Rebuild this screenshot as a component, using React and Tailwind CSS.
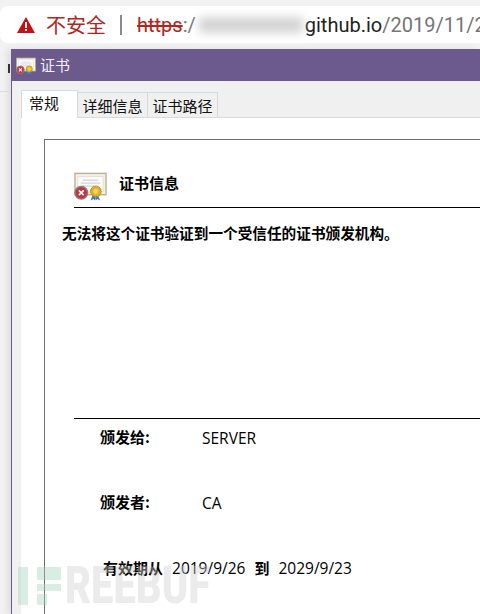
const CJK = '"Noto Sans CJK SC", "Open Sans", sans-serif';

const CertIcon = ({ w = 33, h = 29, light = false }) => (
  <svg width={w} height={h} viewBox="0 0 34 29" className="shrink-0">
    <rect x="1" y="1" width="32" height="22" fill={light ? '#f6f4ee' : '#f4f1e6'} stroke="#b9ae93" strokeWidth="1.4" />
    <rect x="4" y="4" width="26" height="16" fill="#fbfbfa" stroke="#ddd8c8" strokeWidth="0.8" />
    <path d="M9 8h16M7 11h20M8 14h13" stroke="#c3c9d6" strokeWidth="1" />
    <path d="M19 24l-2 5 3-1.5 1.5 1.5 1-5zM25 24l2 5-3-1.5-1.5 1.5-1-5z" fill="#3f79cf" />
    <circle cx="22.5" cy="19.5" r="5.5" fill="#e2b21f" stroke="#a8841a" strokeWidth="0.8" />
    <circle cx="22.5" cy="19.5" r="2.6" fill="#f1d264" />
    <circle cx="7.5" cy="21" r="6.5" fill="#c8323f" stroke="#8d7b7e" strokeWidth="1.5" />
    <path d="M5 18.5l5 5M10 18.5l-5 5" stroke="#fff" strokeWidth="1.8" />
  </svg>
);

const tabs = ['详细信息', '证书路径'];
const ROBOTO = { fontFamily: '"Roboto", sans-serif' };
const OPEN = { fontFamily: '"Open Sans", sans-serif' };

export default function App() {
  return (
    <div className="relative w-[480px] h-[614px] overflow-hidden bg-[#f2f2f2] flex flex-col" style={{ fontFamily: CJK }}>
      {/* address bar */}
      <div className="mt-[6px] h-[37px] bg-white rounded-l-[8px] flex items-center pl-[17px] whitespace-nowrap overflow-hidden">
        <svg width="18" height="16" viewBox="0 0 18 16" className="shrink-0">
          <path d="M9 0l9 16H0z" fill="#c80e0e" />
          <rect x="8" y="5" width="2" height="6" fill="#fff" />
          <rect x="8" y="12" width="2" height="2" fill="#fff" />
        </svg>
        <span className="ml-[11px] text-[20px] leading-none text-[#b3261e] shrink-0">不安全</span>
        <span className="ml-[14px] w-[2px] h-[20px] bg-[#8a8a8a] shrink-0" />
        <span className="ml-[15px] text-[20px] leading-none text-[#b3261e] line-through shrink-0" style={ROBOTO}>https</span>
        <span className="text-[20px] leading-none text-[#757575] shrink-0" style={ROBOTO}>:/</span>
        <span className="ml-[3px] w-[104px] h-[16px] bg-[#d4d4d4] blur-[5px] shrink-0" />
        <span className="ml-[2px] text-[20px] leading-none text-[#222] shrink-0" style={ROBOTO}>github.io</span>
        <span className="text-[20px] leading-none text-[#757575] shrink-0" style={ROBOTO}>/2019/11/2</span>
      </div>

      <div className="absolute left-[8px] top-[64px] w-[2px] h-[9px] bg-[#333]" />
      <div className="absolute left-0 top-[91px] w-[11px] h-px bg-[#dcdcdc]" />

      {/* dialog window */}
      <div className="mt-[6px] ml-[11px] flex-1 flex flex-col border-l border-[#6c5a8c] min-h-0 shadow-[-4px_0_6px_rgba(0,0,0,0.08)]">
        <div className="h-[32px] bg-[#6c5a8c] flex items-center pl-[4px] pt-[1px] text-[#f2f0f6] text-[15px]">
          <CertIcon w={20} h={20} light />
          <span className="ml-[4px]">证书</span>
        </div>
        <div className="flex-1 bg-[#f0f0f0] pl-[9px] flex flex-col min-h-0">
          <div className="flex items-end h-[37px] border-b border-[#d9d9d9] text-[15px] text-[#111]">
            <div className="w-[57px] h-[28px] -mb-px bg-white border border-b-0 border-[#d9d9d9] pl-[7px] pt-[1px] leading-[22px]">常规</div>
            {tabs.map((tab) => (
              <div key={tab} className="w-[70px] h-[25px] border border-l-0 border-b-0 border-[#d9d9d9] flex items-center justify-center leading-none">{tab}</div>
            ))}
          </div>
          <div className="flex-1 bg-white pl-[23px] pt-[21px] min-h-0">
            <div className="h-full border-l border-t border-[#6e6e6e] flex flex-col text-black">
              <div className="mt-[32px] ml-[29px] flex items-start h-[36px] border-b border-black">
                <CertIcon />
                <span className="ml-[12px] mt-[1px] text-[15px] font-bold leading-[20px]">证书信息</span>
              </div>
              <div className="mt-[15px] ml-[17px] text-[14.65px] font-bold leading-[20px] whitespace-nowrap">无法将这个证书验证到一个受信任的证书颁发机构。</div>
              <div className="mt-[175px] ml-[29px] border-t border-black" />
              <div className="mt-[7px] ml-[55px] flex items-center h-[22px] text-[15px]">
                <span className="w-[102px] font-bold">颁发给:</span>
                <span className="mt-[3px] text-[15.5px]" style={OPEN}>SERVER</span>
              </div>
              <div className="mt-[43px] ml-[55px] flex items-center h-[22px] text-[15px]">
                <span className="w-[102px] font-bold">颁发者:</span>
                <span className="mt-[3px] text-[15.5px]" style={OPEN}>CA</span>
              </div>
              <div className="mt-[44px] ml-[58px] flex items-center h-[22px] text-[15px] whitespace-nowrap">
                <span className="font-bold">有效期从</span>
                <span className="ml-[9px] mt-[1px] text-[15.5px]" style={OPEN}>2019/9/26</span>
                <span className="ml-[9px] font-bold">到</span>
                <span className="ml-[9px] mt-[1px] text-[15.5px]" style={OPEN}>2029/9/23</span>
              </div>
            </div>
          </div>
        </div>
      </div>

      {/* watermark */}
      <div className="absolute left-[18px] top-[567px] flex items-center opacity-40 pointer-events-none">
        <svg width="43" height="38" viewBox="0 0 43 38">
          <rect x="0" y="0" width="10" height="38" fill="#a5d3bd" />
          <rect x="19" y="0" width="24" height="13" fill="#a5d3bd" />
          <rect x="19" y="17" width="24" height="7" fill="#a5d3bd" />
          <rect x="19" y="27" width="10" height="11" fill="#a5d3bd" />
        </svg>
        <span className="ml-[4px] text-[40px] leading-[38px] font-black text-[#cfcfcf] scale-y-[1.3] origin-center" style={ROBOTO}>REEBUF</span>
      </div>
    </div>
  );
}
